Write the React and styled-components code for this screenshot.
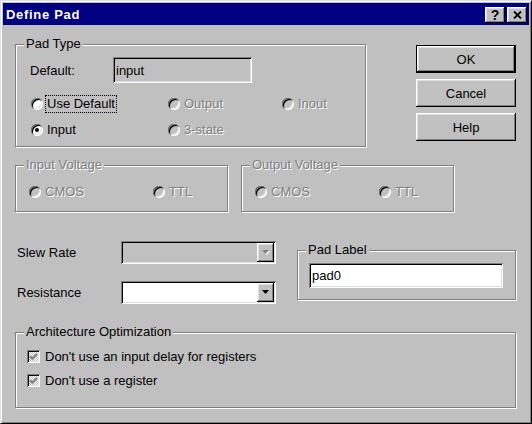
import styled, { createGlobalStyle } from "styled-components";

const GlobalStyle = createGlobalStyle`
  * {
    box-sizing: border-box;
  }
  html, body {
    margin: 0;
    padding: 0;
    background: #c0c0c0;
  }
  body {
    font-family: "Liberation Sans", Arial, sans-serif;
    font-size: 13px;
    color: #000;
  }
`;

const raised = `
  box-shadow: inset -1px -1px #000, inset 1px 1px #fff, inset -2px -2px #808080, inset 2px 2px #dfdfdf;
`;

const sunken = `
  box-shadow: inset 1px 1px #808080, inset -1px -1px #fff, inset 2px 2px #000, inset -2px -2px #dfdfdf;
`;

const Window = styled.div`
  width: 532px;
  height: 424px;
  display: flex;
  flex-direction: column;
  background: #c0c0c0;
  border: 1px solid;
  border-color: #dfdfdf #000 #000 #dfdfdf;
  box-shadow: inset 1px 1px #fff, inset -1px -1px #808080;
  padding: 2px;
`;

const TitleBar = styled.div`
  flex: none;
  height: 22px;
  display: flex;
  align-items: center;
  padding: 1px 2px 0 3px;
  background: #000080;
`;

const Title = styled.span`
  color: #fff;
  font-weight: bold;
  font-size: 13px;
  letter-spacing: 0.7px;
`;

const TitleButtons = styled.div`
  margin-left: auto;
  display: flex;
  gap: 2px;
`;

const TitleButton = styled.div`
  width: 20px;
  height: 16px;
  display: flex;
  align-items: center;
  justify-content: center;
  background: #c0c0c0;
  font-weight: bold;
  font-size: 14px;
  line-height: 1;
  ${raised}
`;

const Body = styled.div`
  flex: 1;
  display: flex;
  flex-direction: column;
  padding: 11px 13px 0 12px;
`;

const TopRow = styled.div`
  display: flex;
  justify-content: space-between;
  align-items: flex-start;
`;

const Group = styled.fieldset`
  margin: ${(p) => p.$mt || 0}px 0 0 0;
  padding: 0;
  min-width: 0;
  width: ${(p) => p.$w}px;
  height: ${(p) => p.$h}px;
  border: 1px solid #808080;
  box-shadow: inset 1px 1px #fff, 1px 1px #fff;
`;

const Legend = styled.legend`
  margin-left: 8px;
  padding: 0 2px;
  line-height: 16px;
  background: #c0c0c0;
  color: ${(p) => (p.$disabled ? "#808080" : "#000")};
  text-shadow: ${(p) => (p.$disabled ? "1px 1px #fff" : "none")};
`;

const DefaultRow = styled.div`
  display: flex;
  align-items: center;
  margin: 5px 0 0 14px;
`;

const FieldLabel = styled.span`
  flex: none;
  width: ${(p) => p.$w}px;
`;

const Edit = styled.div`
  flex: none;
  width: ${(p) => p.$w}px;
  height: ${(p) => p.$h}px;
  display: flex;
  align-items: center;
  padding: 0 3px;
  background: ${(p) => (p.$readOnly ? "#c0c0c0" : "#fff")};
  ${sunken}
`;

const RadioGrid = styled.div`
  display: grid;
  grid-template-columns: ${(p) => p.$cols};
  row-gap: 6px;
  margin: ${(p) => p.$mt}px 0 0 ${(p) => p.$ml}px;
`;

const Option = styled.div`
  display: flex;
  align-items: center;
  height: 20px;
  gap: ${(p) => p.$gap || 2}px;
  color: ${(p) => (p.$disabled ? "#808080" : "#000")};
  text-shadow: ${(p) => (p.$disabled ? "1px 1px #fff" : "none")};
`;

const RadioDot = styled.span`
  position: relative;
  flex: none;
  width: 12px;
  height: 12px;
  border-radius: 50%;
  background: ${(p) => (p.$disabled ? "#c0c0c0" : "#fff")};
  ${sunken}

  &::after {
    content: "";
    display: ${(p) => (p.$checked ? "block" : "none")};
    position: absolute;
    left: 4px;
    top: 4px;
    width: 4px;
    height: 4px;
    border-radius: 50%;
    background: #000;
  }
`;

const OptionText = styled.span`
  padding: 0 1px;
  line-height: 16px;
  border: 1px dotted ${(p) => (p.$focus ? "#000" : "transparent")};
`;

const ButtonColumn = styled.div`
  display: flex;
  flex-direction: column;
  gap: 6px;
  margin-top: 9px;
`;

const Button = styled.button`
  width: 100px;
  height: 28px;
  padding: 0;
  border: none;
  background: #c0c0c0;
  color: #000;
  font-family: "Liberation Sans", Arial, sans-serif;
  font-size: 13px;
  box-shadow: ${(p) =>
    p.$default
      ? "inset 0 0 0 1px #000, inset -2px -2px #000, inset 2px 2px #fff, inset -3px -3px #808080, inset 3px 3px #dfdfdf"
      : "inset -1px -1px #000, inset 1px 1px #fff, inset -2px -2px #808080, inset 2px 2px #dfdfdf"};
`;

const VoltageRow = styled.div`
  display: flex;
  gap: 13px;
  margin-top: 10px;
`;

const MiddleRow = styled.div`
  display: flex;
  justify-content: space-between;
  align-items: flex-start;
  margin-top: 29px;
  padding-left: 2px;
`;

const FieldColumn = styled.div`
  display: flex;
  flex-direction: column;
  gap: 17px;
`;

const FieldRow = styled.div`
  display: flex;
  align-items: center;
`;

const Combo = styled.div`
  width: 155px;
  height: 23px;
  display: flex;
  justify-content: flex-end;
  padding: 2px;
  background: ${(p) => (p.$disabled ? "#c0c0c0" : "#fff")};
  ${sunken}
`;

const DropButton = styled.div`
  width: 17px;
  height: 100%;
  display: flex;
  align-items: center;
  justify-content: center;
  background: #c0c0c0;
  ${raised}
`;

const PadLabelBody = styled.div`
  margin: 5px 0 0 11px;
`;

const CheckList = styled.div`
  display: flex;
  flex-direction: column;
  gap: 4px;
  margin: 6px 0 0 11px;
`;

const CheckBox = styled.span`
  flex: none;
  width: 13px;
  height: 13px;
  display: flex;
  align-items: center;
  justify-content: center;
  background: repeating-conic-gradient(#c0c0c0 0 25%, #fff 0 50%) 0 0 / 2px 2px;
  ${sunken}
`;

function Arrow({ disabled }) {
  return (
    <svg width="8" height="5" viewBox="0 0 8 5">
      {disabled && <polygon points="1,1 8,1 4.5,5" fill="#fff" />}
      <polygon points="0,0 7,0 3.5,4" fill={disabled ? "#808080" : "#000"} />
    </svg>
  );
}

function Radio({ label, checked, disabled, focus }) {
  return (
    <Option $disabled={disabled}>
      <RadioDot $checked={checked} $disabled={disabled} />
      <OptionText $focus={focus}>{label}</OptionText>
    </Option>
  );
}

function Check({ label }) {
  return (
    <Option $gap={5}>
      <CheckBox>
        <svg width="9" height="9" viewBox="0 0 9 9">
          <path d="M1 4.2 L3.4 6.6 L8 2" fill="none" stroke="#808080" strokeWidth="2" />
        </svg>
      </CheckBox>
      <span>{label}</span>
    </Option>
  );
}

export default function App() {
  return (
    <>
      <GlobalStyle />
      <Window>
        <TitleBar>
          <Title>Define Pad</Title>
          <TitleButtons>
            <TitleButton>?</TitleButton>
            <TitleButton>
              <svg width="9" height="8" viewBox="0 0 9 8">
                <path d="M1 0.5 L8 7.5 M8 0.5 L1 7.5" stroke="#000" strokeWidth="1.8" />
              </svg>
            </TitleButton>
          </TitleButtons>
        </TitleBar>

        <Body>
          <TopRow>
            <Group $w={351} $h={111}>
              <Legend>Pad Type</Legend>
              <DefaultRow>
                <FieldLabel $w={83}>Default:</FieldLabel>
                <Edit $w={139} $h={26} $readOnly>input</Edit>
              </DefaultRow>
              <RadioGrid $cols="137px 114px auto" $mt={11} $ml={15}>
                <Radio label="Use Default" focus />
                <Radio label="Output" disabled />
                <Radio label="Inout" disabled />
                <Radio label="Input" checked />
                <Radio label="3-state" disabled />
              </RadioGrid>
            </Group>
            <ButtonColumn>
              <Button $default>OK</Button>
              <Button>Cancel</Button>
              <Button>Help</Button>
            </ButtonColumn>
          </TopRow>

          <VoltageRow>
            <Group $w={213} $h={55}>
              <Legend $disabled>Input Voltage</Legend>
              <RadioGrid $cols="124px auto" $mt={9} $ml={13}>
                <Radio label="CMOS" disabled />
                <Radio label="TTL" disabled />
              </RadioGrid>
            </Group>
            <Group $w={213} $h={55}>
              <Legend $disabled>Output Voltage</Legend>
              <RadioGrid $cols="124px auto" $mt={9} $ml={13}>
                <Radio label="CMOS" disabled />
                <Radio label="TTL" disabled />
              </RadioGrid>
            </Group>
          </VoltageRow>

          <MiddleRow>
            <FieldColumn>
              <FieldRow>
                <FieldLabel $w={104}>Slew Rate</FieldLabel>
                <Combo $disabled>
                  <DropButton>
                    <Arrow disabled />
                  </DropButton>
                </Combo>
              </FieldRow>
              <FieldRow>
                <FieldLabel $w={104}>Resistance</FieldLabel>
                <Combo>
                  <DropButton>
                    <Arrow />
                  </DropButton>
                </Combo>
              </FieldRow>
            </FieldColumn>
            <Group $w={219} $h={58} $mt={1}>
              <Legend>Pad Label</Legend>
              <PadLabelBody>
                <Edit $w={194} $h={25}>pad0</Edit>
              </PadLabelBody>
            </Group>
          </MiddleRow>

          <Group $w={501} $h={84} $mt={20}>
            <Legend>Architecture Optimization</Legend>
            <CheckList>
              <Check label="Don't use an input delay for registers" />
              <Check label="Don't use a register" />
            </CheckList>
          </Group>
        </Body>
      </Window>
    </>
  );
}
